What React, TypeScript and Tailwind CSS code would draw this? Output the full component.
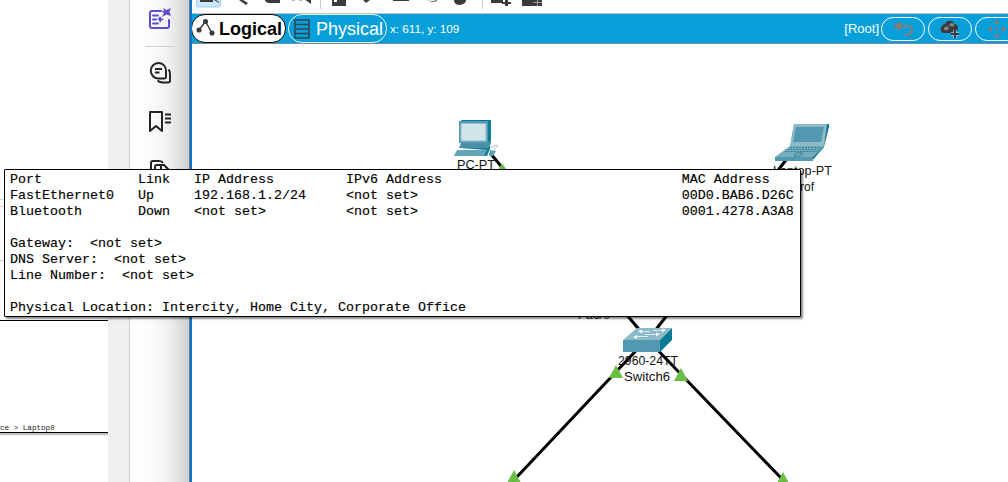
import React from "react";

const rows = [
  "Port            Link   IP Address         IPv6 Address                              MAC Address",
  "FastEthernet0   Up     192.168.1.2/24     <not set>                                 00D0.BAB6.D26C",
  "Bluetooth       Down   <not set>          <not set>                                 0001.4278.A3A8",
  "",
  "Gateway:  <not set>",
  "DNS Server:  <not set>",
  "Line Number:  <not set>",
  "",
  "Physical Location: Intercity, Home City, Corporate Office",
];

function DocumentPane() {
  return (
    <div className="flex h-full w-[108px] shrink-0 flex-col bg-white">
      <div className="mt-[199px] h-[8px] border-y border-[#d8d8d8]" />
      <div className="mt-[53px] h-px bg-[#d0d0d0]" />
      <div className="mt-[59px] h-[113px] border-y border-black shadow-[0_2px_1px_rgba(0,0,0,0.25)]">
        <div className="pt-[103px] font-['Liberation_Mono',monospace] text-[7.6px] leading-[8px] whitespace-pre text-[#222]">
          ce &gt; Laptop0
        </div>
      </div>
    </div>
  );
}

function SideRail() {
  return (
    <div className="flex h-full w-[60px] shrink-0 flex-col items-center border-l border-[#d0d0d0] bg-[linear-gradient(90deg,#fff_0%,#fcfcfc_35%,#efefef_68%,#cfcfcf_100%)]">
      <svg className="mt-[7px] shrink-0" width="24" height="24" fill="none" stroke="#5a4fcf" strokeWidth="2">
        <path d="M13 4H4Q2 4 2 6V19Q2 21 4 21H19Q21 21 21 19V13M5 8.500H10M5 12.500H8M5 16.500H10" strokeLinecap="round" />
        <path d="M15 1L18.500 3 23 1 21.500 5 23 9 18.500 7.500 14 10 16 6 13 4 16 4Z" fill="#5a4fcf" stroke="none" />
        <path d="M12 9L13.500 11.500 16 12 13.500 13.500 12 16 11 13 9 12 11 11Z" fill="#5a4fcf" stroke="none" />
      </svg>
      <div className="mt-[15px] h-px w-[29px] shrink-0 bg-[#cfcfcf]" />
      <svg className="mt-[14px] shrink-0" width="24" height="24" fill="none" stroke="#222" strokeWidth="1.900">
        <path d="M10.500 2a7.500 7.500 0 0 0 0 15.500h6q1.500 0 1.500-1.500v-6.500a7.500 7.500 0 0 0-7.500-7.500ZM7 8H14M7 11.500H11.500M20.500 8.500Q22 10 22 13V19.500Q22 21.500 20 21.500H15Q11.500 21.500 9.500 19.500" />
      </svg>
      <svg className="mt-[25px] shrink-0" width="24" height="24" fill="none" stroke="#222" strokeWidth="2">
        <path d="M2 2H14V21L8 16 2 21Z" strokeLinejoin="round" />
        <path d="M17 4.500H23M17 8.500H23M17 12.500H23" strokeWidth="1.800" />
      </svg>
      <svg className="mt-[24px] shrink-0" width="24" height="24" fill="none" stroke="#222" strokeWidth="2">
        <path d="M3 13V5Q3 3 5 3H11Q14 3 15 5M7 18V9Q7 7 9 7H16L21 12V18ZM13 7V12H20" />
      </svg>
    </div>
  );
}

function Toolbar() {
  return (
    <div className="h-[13px] shrink-0 bg-white">
      <svg width="816" height="13">
        <rect x="4.500" y="-8" width="24" height="15" rx="2" fill="#cce8ff" stroke="#99d1ff" />
        <g fill="#3b3b3d">
          <path d="M8 0H21V2H8ZM22 0L27 3V2L24 0Z" />
          <path d="M47 0L54 5 56 3 51 0Z" />
          <path d="M73 0H88V3H76L73 1Z" />
          <path d="M113 0H119V4L115 1Z" />
          <path d="M100 0H103V1H100ZM107 0H110V1H107Z" fill="#bbb" />
          <path d="M140 0H154V6H140Z" />
          <path d="M171 0L174 3 178 0Z" />
          <path d="M201 0H217V1H201Z" />
          <path d="M235 0Q240 2 245 0V1Q240 3 235 0Z" />
          <path d="M262 0Q262 5 268 5Q274 4 274 0Z" />
          <path d="M299 0H311V3H299ZM313 0H316V2H319V4H316V6H313V4H310V2H313Z" />
          <path d="M330 0H350V6H330Z" />
        </g>
        <path d="M341 2.500H350M345.500 0V6" stroke="#999" />
        <path d="M142 0H145V2H142Z" fill="white" />
        <path d="M128.500 0V9M290.500 0V9" stroke="#c8c8c8" />
      </svg>
    </div>
  );
}

function NavBar() {
  return (
    <div className="flex h-[31px] shrink-0 items-center overflow-hidden border-t border-b border-t-[#b8c4c8] border-b-[#7d8b91] bg-[#069fd9] font-['Liberation_Sans',sans-serif] text-white">
      <div className="-ml-px flex h-[29px] w-[95px] shrink-0 items-center rounded-[14px] border border-black bg-white pl-[4px] text-black">
        <svg width="20" height="20" className="shrink-0 -translate-y-[3px]" stroke="#3b3b3d" strokeWidth="1.500" fill="#3b3b3d">
          <path d="M3 14L9.500 5.500 16 17" fill="none" />
          <circle cx="3" cy="14" r="1.800" /><circle cx="9.500" cy="5.500" r="1.800" /><circle cx="16" cy="17" r="1.800" />
        </svg>
        <span className="ml-[3px] text-[18px] leading-[28px] font-bold">Logical</span>
      </div>
      <div className="ml-[2px] flex h-[29px] w-[99px] shrink-0 items-center rounded-[14px] border border-white/90 pl-[5px]">
        <svg width="16" height="20" className="shrink-0" fill="none" stroke="#35454f" strokeWidth="1.500">
          <path d="M1 1H15V19H1ZM1 5.500H15M1 10H15M1 14.500H15" />
        </svg>
        <span className="ml-[6px] text-[18px] leading-[28px]">Physical</span>
      </div>
      <span className="ml-[3px] text-[11.700px]">x: 611, y: 109</span>
      <div className="min-w-0 flex-1" />
      <span className="mr-[2px] text-[13px]">[Root]</span>
      <div className="flex h-[24px] w-[44px] shrink-0 items-center justify-center rounded-[12px] border border-white">
        <svg width="22" height="18" fill="none" stroke="#837e7c" strokeWidth="2.200">
          <path d="M6 6H14Q20 6 20 10.500Q20 15 14 15H12" />
          <path d="M9 1V11L1 6Z" fill="#837e7c" stroke="none" />
        </svg>
      </div>
      <div className="ml-[3px] flex h-[24px] w-[44px] shrink-0 items-center justify-center rounded-[12px] border border-white">
        <svg width="22" height="20">
          <path d="M5 14A4 4 0 0 1 3 7Q4 5 6 5Q8 1 12 2Q15 2 15 5Q19 5 19 9Q19 13 16 14Z" fill="#3b3b3d" />
          <path d="M6 11Q3 10 6 8Q9 6 10 9Q9 12 6 11M11 7Q9 5 13 4Q16 5 15 7Q13 8 11 7" fill="#858585" />
          <path d="M12 15H20M16 11V19" stroke="#9ccce2" strokeWidth="3.500" />
          <path d="M12 15H20M16 11V19" stroke="#3b3b3d" strokeWidth="2" />
        </svg>
      </div>
      <div className="ml-[3px] -mr-[11px] flex h-[24px] w-[44px] shrink-0 items-center justify-center rounded-[12px] border border-white">
        <svg width="20" height="20" fill="#837e7c">
          <path d="M10 0L13 5H7ZM10 20L13 15H7ZM0 10L5 7V13ZM20 10L15 7V13Z" />
          <circle cx="10" cy="10" r="1.500" />
        </svg>
      </div>
    </div>
  );
}

function Network() {
  return (
    <svg width="816" height="438" viewBox="192 44 816 438" fontFamily="'Liberation Sans', sans-serif" fontSize="12.500" fill="#111">
      <path d="M490 153L648 340L789 156M648 338L514 480M646 338L783 480" fill="none" stroke="black" strokeWidth="3" />
      <g>
        <path d="M459 122L462 120H491V141L487 144Z" fill="#087b95" />
        <path d="M459 121H488V143H459Z" fill="#539bb3" />
        <path d="M461 123.500H486V141H461Z" fill="#d2e3e9" stroke="#93bbca" />
        <path d="M461 143H487L491 140V144L487 148H459Z" fill="#488fa8" />
        <path d="M457 150H488L486 156H454Z" fill="#63a4b8" />
        <path d="M459 148H487L490 145V149L487 156H484L487 150Z" fill="#187d96" />
        <path d="M490 150L496 151 493 156H489Z" fill="#5b9fb2" />
        <path d="M490 147L498 145 494 150" fill="#f5f5f5" stroke="#b9cdd3" />
      </g>
      <g>
        <path d="M794 124H829V127L824 147L812 161H776V157L790 148Z" fill="#147a93" />
        <path d="M794 124H827L824 146H790Z" fill="#8db9c8" />
        <path d="M796 127H824L821 142H793Z" fill="#5298b0" />
        <path d="M790 146H824L813 157H775Z" fill="#75adbd" />
        <path d="M775 157H813V161H775Z" fill="#5298b0" />
        <path d="M790 147.500H821M787 149.500H819M785 151.500H817" stroke="#398299" strokeDasharray="2 1" />
        <path d="M794 156L796 153H803L800 156Z" fill="none" stroke="#398299" />
      </g>
      <g>
        <path d="M623 340L637 328H672L660 340V352H623Z" fill="#8dbac8" />
        <path d="M660 340L672 328V340L660 352Z" fill="#087b95" />
        <path d="M623 340H660V352H623Z" fill="#5099b1" />
        <path d="M640 331.500H650M653 330.500H665M645 334.500H657M635 336.500H648" stroke="#d9e9ed" strokeWidth="1" />
        <path d="M638 331L642 329.500V333.500ZM666 330L662 328.500V332.500ZM660 334L656 332.500V336.500ZM633 337L637 335V339Z" fill="white" />
      </g>
      <g fill="#6abd45">
        <path d="M502 163L509 174H496Z" />
        <path d="M616 365L623 378H609ZM681 368L688 381H674ZM514 470L521 483H507ZM783 472L790 485H776Z" />
      </g>
      <text x="457" y="169" textLength="38" lengthAdjust="spacingAndGlyphs">PC-PT</text>
      <text x="773" y="175" textLength="59" lengthAdjust="spacingAndGlyphs">Laptop-PT</text>
      <text x="792" y="191" textLength="22" lengthAdjust="spacingAndGlyphs">Prof</text>
      <text x="578" y="319" textLength="32" lengthAdjust="spacingAndGlyphs">Fac/0</text>
      <text x="618" y="365" textLength="60" lengthAdjust="spacingAndGlyphs">2960-24TT</text>
      <text x="624" y="381" textLength="46" lengthAdjust="spacingAndGlyphs">Switch6</text>
    </svg>
  );
}

export default function App() {
  return (
    <div className="relative flex h-[482px] w-[1008px] overflow-hidden bg-white">
      <DocumentPane />
      <div className="h-full w-[21px] shrink-0 bg-[#efefef]" />
      <SideRail />
      <div className="h-full w-[3px] shrink-0 border-l border-[#777] bg-[#0078d7]" />
      <main className="flex h-full min-w-0 flex-1 flex-col">
        <Toolbar />
        <NavBar />
        <Network />
      </main>
      <div className="absolute top-[169px] left-[4px] h-[148px] w-[797px] rounded-[1px] border border-black bg-white pt-[2px] pl-[5px] font-['Liberation_Mono',monospace] text-[13.333px] leading-[16px] text-black shadow-[2px_2px_2px_rgba(0,0,0,0.45)] [-webkit-text-stroke:0.15px_black]">
        {rows.map((row, i) => (
          <div key={i} className="h-[16px] whitespace-pre">{row}</div>
        ))}
      </div>
    </div>
  );
}
